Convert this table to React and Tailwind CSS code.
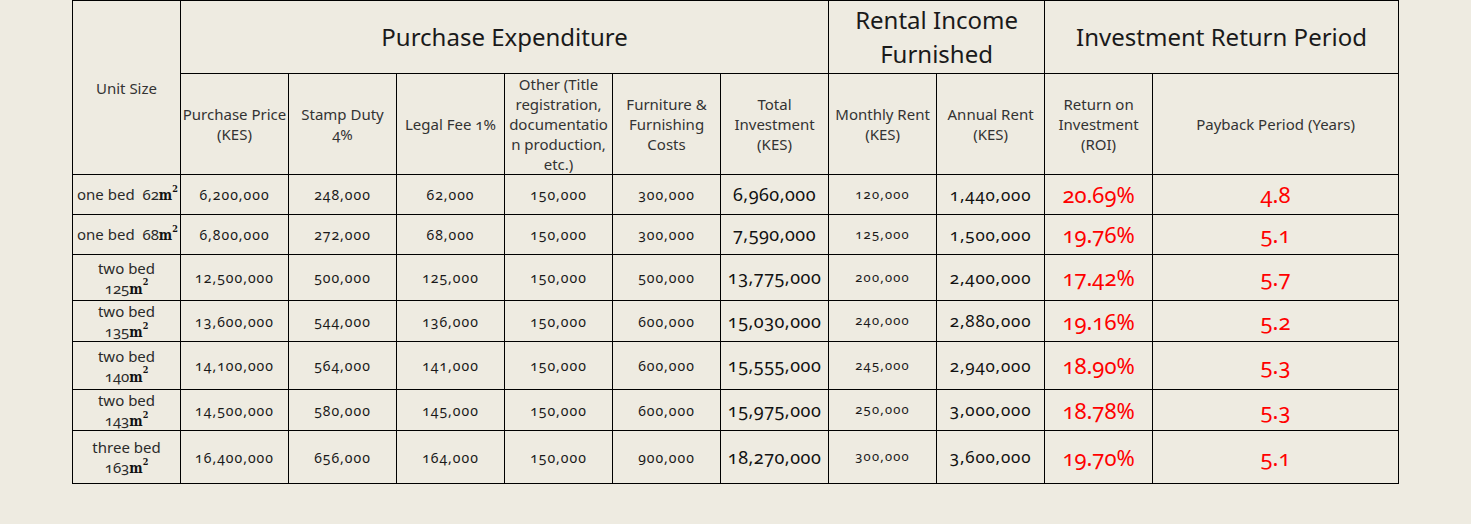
// Investment return table for apartment units
const rows = [
  { bed: "one bed", size: "62", inline: true, h: "h-[40px]", price: "6,200,000", stamp: "248,000", legal: "62,000", other: "150,000", furn: "300,000", total: "6,960,000", monthly: "120,000", annual: "1,440,000", roi: "20.69%", payback: "4.8" },
  { bed: "one bed", size: "68", inline: true, h: "h-[40px]", price: "6,800,000", stamp: "272,000", legal: "68,000", other: "150,000", furn: "300,000", total: "7,590,000", monthly: "125,000", annual: "1,500,000", roi: "19.76%", payback: "5.1" },
  { bed: "two bed", size: "125", h: "h-[46px]", price: "12,500,000", stamp: "500,000", legal: "125,000", other: "150,000", furn: "500,000", total: "13,775,000", monthly: "200,000", annual: "2,400,000", roi: "17.42%", payback: "5.7" },
  { bed: "two bed", size: "135", h: "h-[41px]", price: "13,600,000", stamp: "544,000", legal: "136,000", other: "150,000", furn: "600,000", total: "15,030,000", monthly: "240,000", annual: "2,880,000", roi: "19.16%", payback: "5.2" },
  { bed: "two bed", size: "140", h: "h-[48px]", price: "14,100,000", stamp: "564,000", legal: "141,000", other: "150,000", furn: "600,000", total: "15,555,000", monthly: "245,000", annual: "2,940,000", roi: "18.90%", payback: "5.3" },
  { bed: "two bed", size: "143", h: "h-[41px]", price: "14,500,000", stamp: "580,000", legal: "145,000", other: "150,000", furn: "600,000", total: "15,975,000", monthly: "250,000", annual: "3,000,000", roi: "18.78%", payback: "5.3" },
  { bed: "three bed", size: "163", h: "h-[53px]", price: "16,400,000", stamp: "656,000", legal: "164,000", other: "150,000", furn: "900,000", total: "18,270,000", monthly: "300,000", annual: "3,600,000", roi: "19.70%", payback: "5.1" },
];

function SqM() {
  return (
    <span className="font-bold text-[#111] text-[14px] font-['DejaVu_Serif_Condensed','DejaVu_Serif',serif] leading-none">
      m<sup className="text-[9px] align-[4px]">2</sup>
    </span>
  );
}

const cell = "border border-black text-center align-middle p-0";
const sub = "border border-black text-center align-middle p-0 text-[15px] leading-[20px] text-[#333] font-normal";
const big = "border border-black text-center align-middle p-0 text-[24px] leading-[34px] text-[#1a1a1a] font-normal";
const num = cell + " text-[14px] tracking-[1px] text-[#1a1a1a]";

export default function App() {
  return (
    <div className="min-h-screen bg-[#eeebe1] pl-[72px] font-['Noto_Sans',sans-serif] oldstyle-nums">
      <table className="border-collapse table-fixed w-[1326px] bg-[#eeebe1]">
        <colgroup>
          {Array.from({ length: 10 }).map((_, i) => (
            <col key={i} className="w-[108px]" />
          ))}
          <col className="w-[246px]" />
        </colgroup>
        <thead>
          <tr className="h-[73px]">
            <th rowSpan={2} className={sub}>Unit Size</th>
            <th colSpan={6} className={big}>Purchase Expenditure</th>
            <th colSpan={2} className={big}>
              Rental Income
              <br />
              Furnished
            </th>
            <th colSpan={2} className={big}>Investment Return Period</th>
          </tr>
          <tr className="h-[100px]">
            <th className={sub}>Purchase Price<br />(KES)</th>
            <th className={sub}>Stamp Duty<br />4%</th>
            <th className={sub}>Legal Fee 1%</th>
            <th className={sub}>
              Other (Title<br />registration,<br />documentatio<br />n production,<br />etc.)
            </th>
            <th className={sub}>Furniture &amp;<br />Furnishing<br />Costs</th>
            <th className={sub}>Total<br />Investment<br />(KES)</th>
            <th className={sub}>Monthly Rent<br />(KES)</th>
            <th className={sub}>Annual Rent<br />(KES)</th>
            <th className={sub}>Return on<br />Investment<br />(ROI)</th>
            <th className={sub}>Payback Period (Years)</th>
          </tr>
        </thead>
        <tbody>
          {rows.map((r) => (
            <tr key={r.size} className={r.h}>
              {r.inline ? (
                <td className={cell + " text-left pl-[4px] text-[15px] text-[#2a2a2a] whitespace-nowrap"}>
                  {r.bed}&nbsp; {r.size}
                  <SqM />
                </td>
              ) : (
                <td className={cell + " text-[15px] leading-[20px] text-[#2a2a2a]"}>
                  {r.bed}
                  <br />
                  {r.size}
                  <SqM />
                </td>
              )}
              <td className={num}>{r.price}</td>
              <td className={num}>{r.stamp}</td>
              <td className={num}>{r.legal}</td>
              <td className={num}>{r.other}</td>
              <td className={num}>{r.furn}</td>
              <td className={cell + " text-[18px] tracking-[0.5px] text-[#111]"}>{r.total}</td>
              <td className={cell + " text-[13px] tracking-[1.2px] text-[#1a1a1a]"}>{r.monthly}</td>
              <td className={cell + " text-[17px] tracking-[0.8px] text-[#111]"}>{r.annual}</td>
              <td className={cell + " text-[22px] text-[#f00]"}>{r.roi}</td>
              <td className={cell + " text-[22px] text-[#f00]"}>{r.payback}</td>
            </tr>
          ))}
        </tbody>
      </table>
    </div>
  );
}
